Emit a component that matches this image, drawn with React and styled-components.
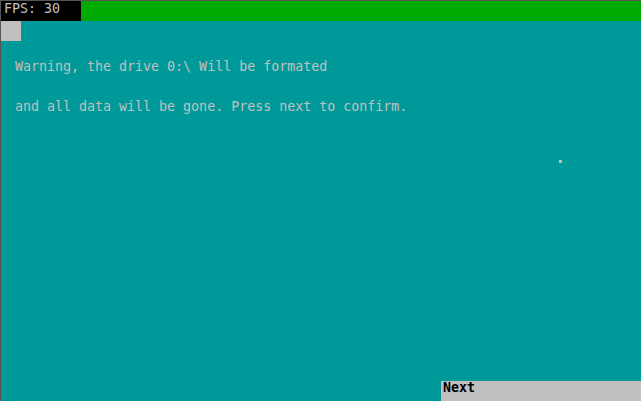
import React from "react";
import styled, { createGlobalStyle } from "styled-components";

const GlobalStyle = createGlobalStyle`
  html, body {
    margin: 0;
    padding: 0;
    background: #009999;
    overflow: hidden;
  }
  #root {
    width: 641px;
    height: 401px;
  }
`;

const Screen = styled.div`
  position: relative;
  box-sizing: border-box;
  width: 641px;
  height: 401px;
  display: flex;
  flex-direction: column;
  background: #009999;
  border-top: 1px solid #555555;
  border-left: 1px solid #555555;
  font-family: "DejaVu Sans Mono", "Liberation Mono", monospace;
  font-size: 13.3px;
  color: #c0c0c0;
`;

const TopBar = styled.div`
  display: flex;
  height: 20px;
  background: #00aa00;
`;

const Fps = styled.div`
  width: 80px;
  height: 20px;
  background: #000000;
  color: #c0c0c0;
  line-height: 16px;
  padding-left: 3px;
  box-sizing: border-box;
  white-space: pre;
`;

const Square = styled.div`
  width: 20px;
  height: 20px;
  background: #c0c0c0;
`;

const Content = styled.div`
  flex: 1;
  padding: 18px 0 0 14px;
`;

const Line = styled.p`
  margin: 0 0 24px;
  line-height: 16px;
  white-space: pre;
`;

const Footer = styled.div`
  display: flex;
  justify-content: flex-end;
`;

const NextButton = styled.div`
  width: 200px;
  height: 20px;
  box-sizing: border-box;
  background: #c0c0c0;
  color: #000000;
  font-weight: bold;
  line-height: 14px;
  padding-left: 2px;
`;

const Dot = styled.div`
  position: absolute;
  left: 558px;
  top: 159px;
  width: 3px;
  height: 3px;
  background: #c0c0c0;
`;

const App = () => {
  return (
    <>
      <GlobalStyle />
      <Screen>
        <TopBar>
          <Fps>FPS: 30</Fps>
        </TopBar>
        <Square />
        <Content>
          <Line>Warning, the drive 0:\ Will be formated</Line>
          <Line>and all data will be gone. Press next to confirm.</Line>
        </Content>
        <Footer>
          <NextButton>Next</NextButton>
        </Footer>
        <Dot />
      </Screen>
    </>
  );
};

export default App;
